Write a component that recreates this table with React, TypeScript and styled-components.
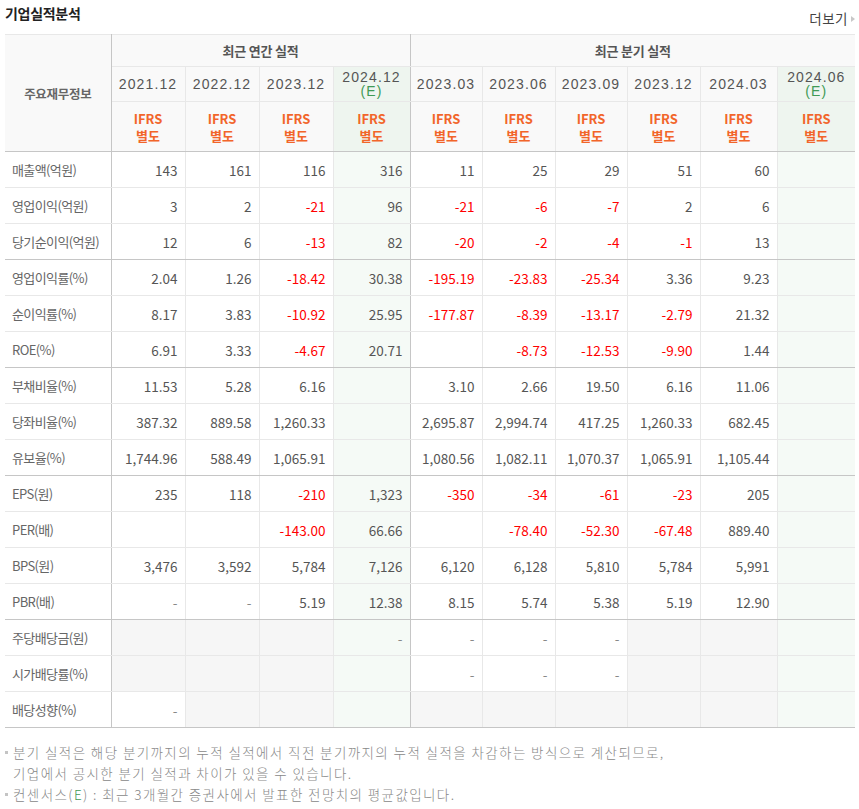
import React from "react";
import styled, { createGlobalStyle, css } from "styled-components";

type Cell = string | null;

interface RowData {
  label: string;
  annual: Cell[];
  quarter: Cell[];
  groupEnd?: boolean;
}

const annualCols = [
  { date: "2021.12" },
  { date: "2022.12" },
  { date: "2023.12" },
  { date: "2024.12", est: true },
];

const quarterCols = [
  { date: "2023.03" },
  { date: "2023.06" },
  { date: "2023.09" },
  { date: "2023.12" },
  { date: "2024.03" },
  { date: "2024.06", est: true },
];

const rows: RowData[] = [
  { label: "매출액(억원)", annual: ["143", "161", "116", "316"], quarter: ["11", "25", "29", "51", "60", ""] },
  { label: "영업이익(억원)", annual: ["3", "2", "-21", "96"], quarter: ["-21", "-6", "-7", "2", "6", ""] },
  { label: "당기순이익(억원)", annual: ["12", "6", "-13", "82"], quarter: ["-20", "-2", "-4", "-1", "13", ""], groupEnd: true },
  { label: "영업이익률(%)", annual: ["2.04", "1.26", "-18.42", "30.38"], quarter: ["-195.19", "-23.83", "-25.34", "3.36", "9.23", ""] },
  { label: "순이익률(%)", annual: ["8.17", "3.83", "-10.92", "25.95"], quarter: ["-177.87", "-8.39", "-13.17", "-2.79", "21.32", ""] },
  { label: "ROE(%)", annual: ["6.91", "3.33", "-4.67", "20.71"], quarter: ["", "-8.73", "-12.53", "-9.90", "1.44", ""], groupEnd: true },
  { label: "부채비율(%)", annual: ["11.53", "5.28", "6.16", ""], quarter: ["3.10", "2.66", "19.50", "6.16", "11.06", ""] },
  { label: "당좌비율(%)", annual: ["387.32", "889.58", "1,260.33", ""], quarter: ["2,695.87", "2,994.74", "417.25", "1,260.33", "682.45", ""] },
  { label: "유보율(%)", annual: ["1,744.96", "588.49", "1,065.91", ""], quarter: ["1,080.56", "1,082.11", "1,070.37", "1,065.91", "1,105.44", ""], groupEnd: true },
  { label: "EPS(원)", annual: ["235", "118", "-210", "1,323"], quarter: ["-350", "-34", "-61", "-23", "205", ""] },
  { label: "PER(배)", annual: ["", "", "-143.00", "66.66"], quarter: ["", "-78.40", "-52.30", "-67.48", "889.40", ""] },
  { label: "BPS(원)", annual: ["3,476", "3,592", "5,784", "7,126"], quarter: ["6,120", "6,128", "5,810", "5,784", "5,991", ""] },
  { label: "PBR(배)", annual: ["-", "-", "5.19", "12.38"], quarter: ["8.15", "5.74", "5.38", "5.19", "12.90", ""], groupEnd: true },
  { label: "주당배당금(원)", annual: [null, null, null, "-"], quarter: ["-", "-", "-", null, null, ""] },
  { label: "시가배당률(%)", annual: [null, null, null, ""], quarter: ["-", "-", "-", null, null, ""] },
  { label: "배당성향(%)", annual: ["-", null, null, ""], quarter: [null, null, null, null, null, ""], groupEnd: true },
];

const widths = [106, 74, 74, 74, 77, 72, 73, 72, 73, 77, 78];
const estIdx = [3, 9];

function App() {
  const cols = [...annualCols, ...quarterCols];

  return (
    <>
      <GlobalStyle />
      <Wrapper>
        <TitleBar>
          <Title>기업실적분석</Title>
          <More href="#">
            더보기<MoreArrow />
          </More>
        </TitleBar>

        <Table>
          <colgroup>
            {widths.map((w, i) => (
              <col key={i} style={{ width: w }} />
            ))}
          </colgroup>
          <thead>
            <tr>
              <HeadTh rowSpan={3} $divider $bottom>
                주요재무정보
              </HeadTh>
              <GroupTh colSpan={4} $divider>
                최근 연간 실적
              </GroupTh>
              <GroupTh colSpan={6}>최근 분기 실적</GroupTh>
            </tr>
            <tr>
              {cols.map((c, i) => (
                <DateTh key={i} $est={c.est} $divider={i === 3}>
                  <DateLine>{c.date}</DateLine>
                  {c.est && <Est>(E)</Est>}
                </DateTh>
              ))}
            </tr>
            <tr>
              {cols.map((c, i) => (
                <IfrsTh key={i} $est={c.est} $divider={i === 3}>
                  <IfrsLine>IFRS</IfrsLine>
                  <IfrsLine>별도</IfrsLine>
                </IfrsTh>
              ))}
            </tr>
          </thead>
          <tbody>
            {rows.map((r) => {
              const cells = [...r.annual, ...r.quarter];
              return (
                <tr key={r.label}>
                  <LabelTd $bottom={r.groupEnd}>{r.label}</LabelTd>
                  {cells.map((v, i) => (
                    <ValueTd
                      key={i}
                      $est={estIdx.includes(i)}
                      $empty={v === null}
                      $neg={!!v && v.startsWith("-") && v.length > 1}
                      $dash={v === "-"}
                      $divider={i === 3}
                      $bottom={r.groupEnd}
                    >
                      {v}
                    </ValueTd>
                  ))}
                </tr>
              );
            })}
          </tbody>
        </Table>

        <Notes>
          <Note>
            분기 실적은 해당 분기까지의 누적 실적에서 직전 분기까지의 누적 실적을 차감하는 방식으로 계산되므로,
            <br />
            기업에서 공시한 분기 실적과 차이가 있을 수 있습니다.
          </Note>
          <Note>
            컨센서스(<EstNote>E</EstNote>) : 최근 3개월간 증권사에서 발표한 전망치의 평균값입니다.
          </Note>
        </Notes>
      </Wrapper>
    </>
  );
}

//@ styled ////////////////////////////////////////
const GlobalStyle = createGlobalStyle`
  body {
    margin: 0;
    background: #fff;
    font-family: "Noto Sans CJK KR", "Noto Sans", sans-serif;
    color: #555;
  }
`;

const Wrapper = styled.div`
  width: 850px;
  padding: 0 4px 0 5px;
`;

const TitleBar = styled.div`
  height: 34px;
  display: flex;
  justify-content: space-between;
  align-items: flex-start;
`;

const Title = styled.h2`
  margin: 3px 0 0;
  font-size: 14px;
  font-weight: 700;
  color: #222;
  line-height: 20px;
  letter-spacing: -0.3px;
`;

const More = styled.a`
  margin-top: 9px;
  display: flex;
  align-items: center;
  gap: 3px;
  font-size: 13.5px;
  line-height: 19px;
  color: #444;
  text-decoration: none;
  letter-spacing: 0.5px;
`;

const MoreArrow = styled.span`
  width: 0;
  height: 0;
  border-top: 3.5px solid transparent;
  border-bottom: 3.5px solid transparent;
  border-left: 4px solid #c8c8c8;
`;

const Table = styled.table`
  width: 850px;
  table-layout: fixed;
  border-collapse: collapse;
  border-top: 1px solid #c2c2c2;
  border-bottom: 1px solid #c2c2c2;
`;

type CellProps = {
  $est?: boolean;
  $divider?: boolean;
  $bottom?: boolean;
  $empty?: boolean;
  $neg?: boolean;
  $dash?: boolean;
};

const cellBase = css<CellProps>`
  padding: 0;
  border: 1px solid #e8e8e8;
  border-left: none;
  &:last-child {
    border-right: none;
  }
  ${({ $divider }) =>
    $divider &&
    css`
      border-right: 1px solid #c6c6c6;
    `}
  ${({ $bottom }) =>
    $bottom &&
    css`
      border-bottom: 1px solid #c6c6c6;
    `}
`;

const headBase = css<CellProps>`
  ${cellBase}
  background: ${({ $est }) => ($est ? "#eef5ef" : "#f9f9f9")};
  text-align: center;
`;

const HeadTh = styled.th<CellProps>`
  ${headBase}
  border-bottom: 1px solid #c6c6c6;
  font-size: 12.5px;
  font-weight: 700;
  color: #666;
  letter-spacing: -0.3px;
`;

const GroupTh = styled.th<CellProps>`
  ${headBase}
  height: 31px;
  font-size: 13px;
  font-weight: 700;
  color: #555;
  letter-spacing: -0.2px;
`;

const DateTh = styled.th<CellProps>`
  ${headBase}
  height: 34px;
  font-family: "Liberation Sans", sans-serif;
  font-size: 14px;
  font-weight: 400;
  color: #555;
  letter-spacing: 1.1px;
`;

const DateLine = styled.span`
  display: block;
  line-height: 14px;
`;

const Est = styled.span`
  display: block;
  line-height: 14px;
  color: #3f9a55;
`;

const IfrsTh = styled.th<CellProps>`
  ${headBase}
  height: 49px;
  border-bottom: 1px solid #c6c6c6;
  font-size: 13px;
  font-weight: 700;
  color: #f2652a;
`;

const IfrsLine = styled.span`
  display: block;
  line-height: 17px;
`;

const LabelTd = styled.td<CellProps>`
  ${cellBase}
  height: 35px;
  border-right: 1px solid #c6c6c6;
  padding-left: 7px;
  font-size: 13px;
  color: #666;
  letter-spacing: -0.6px;
  white-space: nowrap;
`;

const ValueTd = styled.td<CellProps>`
  ${cellBase}
  height: 35px;
  padding-right: 7px;
  text-align: right;
  font-size: 13.5px;
  background: ${({ $est, $empty }) => ($est ? "#f5faf6" : $empty ? "#f6f6f6" : "#fff")};
  color: ${({ $neg, $dash }) => ($neg ? "#ff0000" : $dash ? "#888" : "#555")};
`;

const Notes = styled.ul`
  list-style: none;
  margin: 14px 0 0;
  padding: 0;
`;

const Note = styled.li`
  position: relative;
  padding-left: 8px;
  font-size: 13.5px;
  line-height: 21px;
  font-weight: 300;
  color: #888;
  letter-spacing: 1.4px;

  &::before {
    content: "";
    position: absolute;
    left: 0;
    top: 9px;
    width: 3px;
    height: 3px;
    background: #c4c4c4;
  }
`;

const EstNote = styled.span`
  color: #3f9a55;
`;

export default App;
